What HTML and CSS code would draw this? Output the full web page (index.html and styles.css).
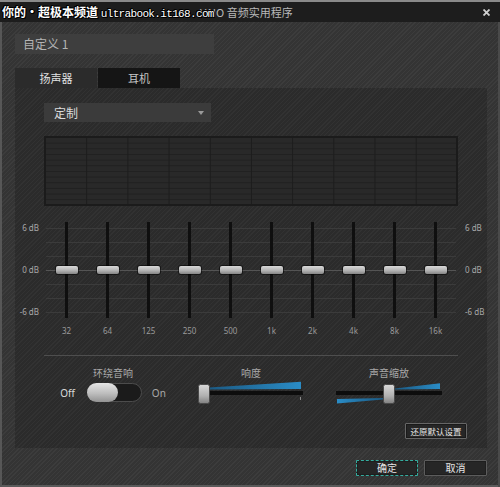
FILE: index.html
```html
<!DOCTYPE html>
<html lang="zh">
<head>
<meta charset="utf-8">
<title>VAIO 音频实用程序</title>
<link rel="stylesheet" href="styles.css">
</head>
<body>
<div class="window">
  <div class="titlebar">
    <span class="title">VAIO 音频实用程序</span>
    <svg class="close" width="7" height="7" viewBox="0 0 7 7"><path d="M0.5 0.5 L6.5 6.5 M6.5 0.5 L0.5 6.5" stroke="#d0d0d0" stroke-width="1.8"/></svg>
    <span class="watermark">你的・超极本频道 <span class="wm-url">ultrabook.it168.com</span></span>
  </div>
  <div class="content">
    <div class="preset">自定义 1</div>
    <div class="tabs">
      <div class="tab active">扬声器</div>
      <div class="tab">耳机</div>
    </div>
    <div class="panel">
      <div class="dropdown">
        <span>定制</span>
        <svg width="6" height="4" viewBox="0 0 6 4"><polygon points="0,0 6,0 3,4" fill="#9a9a9a"/></svg>
      </div>
      <div class="graph"></div>
      <div class="eq">
        <div class="db-col left"><span>6 dB</span><span>0 dB</span><span>-6 dB</span></div>
        <div class="bands">
          <div class="band"><div class="track"><div class="knob"></div></div><span class="freq">32</span></div>
          <div class="band"><div class="track"><div class="knob"></div></div><span class="freq">64</span></div>
          <div class="band"><div class="track"><div class="knob"></div></div><span class="freq">125</span></div>
          <div class="band"><div class="track"><div class="knob"></div></div><span class="freq">250</span></div>
          <div class="band"><div class="track"><div class="knob"></div></div><span class="freq">500</span></div>
          <div class="band"><div class="track"><div class="knob"></div></div><span class="freq">1k</span></div>
          <div class="band"><div class="track"><div class="knob"></div></div><span class="freq">2k</span></div>
          <div class="band"><div class="track"><div class="knob"></div></div><span class="freq">4k</span></div>
          <div class="band"><div class="track"><div class="knob"></div></div><span class="freq">8k</span></div>
          <div class="band"><div class="track"><div class="knob"></div></div><span class="freq">16k</span></div>
        </div>
        <div class="db-col right"><span>6 dB</span><span>0 dB</span><span>-6 dB</span></div>
      </div>
      <div class="sep"></div>
      <div class="controls">
        <div class="group g1">
          <span class="group-label">环绕音响</span>
          <div class="switch-row">
            <span class="off">Off</span>
            <div class="toggle"><div class="toggle-knob"></div></div>
            <span class="on">On</span>
          </div>
        </div>
        <div class="group g2">
          <span class="group-label">响度</span>
          <svg class="hslider" width="106" height="25" viewBox="0 0 106 25">
            <defs>
              <linearGradient id="blueA" x1="0" x2="1" y1="0" y2="0">
                <stop offset="0" stop-color="#1b5a84"/>
                <stop offset="1" stop-color="#2a8cc6"/>
              </linearGradient>
              <linearGradient id="knobA" x1="0" x2="0" y1="0" y2="1">
                <stop offset="0" stop-color="#dadada"/>
                <stop offset="0.6" stop-color="#b0b0b0"/>
                <stop offset="1" stop-color="#808080"/>
              </linearGradient>
            </defs>
            <rect x="0" y="11" width="105" height="4" fill="#0d0d0d"/>
            <polygon points="11,7.6 103,1.7 103,9 11,9.4" fill="url(#blueA)"/>
            <rect x="102" y="17" width="1" height="3" fill="#8a8a8a"/>
            <rect x="0.5" y="4.5" width="11" height="19" rx="2" fill="url(#knobA)" stroke="#4a4a4a"/>
          </svg>
        </div>
        <div class="group g3">
          <span class="group-label">声音缩放</span>
          <svg class="hslider" width="106" height="25" viewBox="0 0 106 25">
            <defs>
              <linearGradient id="blueB" x1="0" x2="1" y1="0" y2="0">
                <stop offset="0" stop-color="#1b5a84"/>
                <stop offset="1" stop-color="#2a8cc6"/>
              </linearGradient>
              <linearGradient id="blueC" x1="0" x2="1" y1="0" y2="0">
                <stop offset="0" stop-color="#2a8cc6"/>
                <stop offset="1" stop-color="#1b5a84"/>
              </linearGradient>
              <linearGradient id="knobB" x1="0" x2="0" y1="0" y2="1">
                <stop offset="0" stop-color="#dadada"/>
                <stop offset="0.6" stop-color="#b0b0b0"/>
                <stop offset="1" stop-color="#808080"/>
              </linearGradient>
            </defs>
            <rect x="0" y="11" width="106" height="4" fill="#0d0d0d"/>
            <polygon points="59,8.6 104,3.3 104,9 59,9.4" fill="url(#blueB)"/>
            <polygon points="1,19 47,18 47,19.4 1,23.4" fill="url(#blueC)"/>
            <rect x="47.5" y="4.5" width="11" height="19" rx="2" fill="url(#knobB)" stroke="#4a4a4a"/>
          </svg>
        </div>
      </div>
      <div class="reset-row"><button class="btn reset">还原默认设置</button></div>
    </div>
    <div class="footer">
      <button class="btn ok">确定</button>
      <button class="btn cancel">取消</button>
    </div>
  </div>
</div>
</body>
</html>
```

FILE: styles.css
```css
* { box-sizing: border-box; }

body {
  margin: 0;
  width: 500px;
  height: 487px;
  overflow: hidden;
  background: #333;
  font-family: "Noto Sans CJK SC", "Noto Sans", sans-serif;
}

.window {
  width: 500px;
  height: 487px;
  background-color: #343434;
  background-image: repeating-linear-gradient(135deg, rgba(255,255,255,0.04) 0 1px, rgba(0,0,0,0) 1px 3px);
  box-shadow: inset 2px 0 #575757, inset -2px 0 #4a4a4a, inset 0 -2px #5a5a5a;
}

/* title bar */
.titlebar {
  position: relative;
  height: 22px;
  border-top: 2px solid #8a8a8a;
  background: #1d1d1d;
  display: flex;
  align-items: center;
  justify-content: space-between;
  padding: 0 10px 0 200px;
}

.title {
  font-size: 11px;
  line-height: 14px;
  color: #b8b8b8;
}

.close { display: block; }

.watermark {
  position: absolute;
  left: 2px;
  top: 2px;
  font-size: 12px;
  line-height: 16px;
  color: #fff;
  font-weight: bold;
  white-space: nowrap;
  text-shadow: 1px 0 #000, -1px 0 #000, 0 1px #000, 0 -1px #000, 1px 1px #000, -1px -1px #000;
}

.wm-url {
  font-family: "Liberation Mono", monospace;
  font-size: 11px;
  font-weight: normal;
  letter-spacing: -0.65px;
}

/* content */
.content {
  padding: 12px 13px 0 15px;
}

.preset {
  width: 199px;
  height: 20px;
  background: #3e3e3e;
  color: #b4b4b4;
  font-size: 12px;
  line-height: 20px;
  padding-left: 8px;
}

.tabs {
  display: flex;
  margin-top: 14px;
}

.tab {
  width: 82px;
  height: 20px;
  font-size: 11px;
  line-height: 20px;
  text-align: center;
  color: #c4c4c4;
  background: #151515;
  margin-left: 1px;
}

.tab.active {
  margin-left: 0;
  background: #2b2b2b;
  color: #e2e2e2;
}

.panel {
  width: 472px;
  height: 360px;
  background-color: #2b2b2b;
  background-image: repeating-linear-gradient(135deg, rgba(255,255,255,0.03) 0 1px, rgba(0,0,0,0) 1px 3px);
  padding-top: 15px;
}

.dropdown {
  margin-left: 29px;
  width: 167px;
  height: 19px;
  background: #3b3b3b;
  display: flex;
  align-items: center;
  justify-content: space-between;
  padding: 0 7px 0 10px;
  color: #dcdcdc;
  font-size: 12px;
  line-height: 19px;
}

.graph {
  margin: 14px 0 0 29px;
  width: 414px;
  height: 70px;
  border: 2px solid #1b1b1b;
  background-color: #292929;
  background-image:
    linear-gradient(to right, #1c1c1c 1px, rgba(0,0,0,0) 1px),
    linear-gradient(to bottom, #202020 1px, rgba(0,0,0,0) 1px);
  background-size: 41.2px 100%, 100% 5.67px;
  background-position: -1px 0, 0 -1px;
}

/* equalizer */
.eq {
  display: flex;
  margin-top: 15px;
}

.db-col {
  width: 31px;
  height: 98px;
  display: flex;
  flex-direction: column;
  justify-content: space-between;
  font-family: "Noto Sans", sans-serif;
  font-size: 8px;
  line-height: 14px;
  color: #a8a8a8;
  white-space: nowrap;
}

.db-col.left {
  align-items: flex-end;
  padding-right: 7px;
}

.db-col.right {
  align-items: flex-start;
  padding-left: 9px;
}

.bands {
  display: flex;
  width: 410px;
  background-image:
    linear-gradient(to bottom, rgba(0,0,0,0) 49px, #545454 49px, #545454 50px, rgba(0,0,0,0) 50px),
    repeating-linear-gradient(to bottom, rgba(0,0,0,0) 0 7px, #3b3b3b 7px 8px, rgba(0,0,0,0) 8px 14px);
  background-size: 100% 98px, 100% 98px;
  background-repeat: no-repeat;
}

.band {
  width: 41px;
  display: flex;
  flex-direction: column;
  align-items: center;
}

.track {
  margin-top: 1px;
  width: 3px;
  height: 96px;
  background: #0f0f0f;
  display: flex;
  align-items: center;
  justify-content: center;
}

.knob {
  flex-shrink: 0;
  width: 22px;
  height: 8px;
  border-radius: 2px;
  background: linear-gradient(#d8d8d8, #b4b4b4 55%, #858585);
  box-shadow: 0 0 0 1px rgba(0,0,0,0.5);
}

.freq {
  margin-top: 7px;
  font-family: "Noto Sans", sans-serif;
  font-size: 8px;
  line-height: 12px;
  color: #9a9a9a;
}

.sep {
  margin: 18px 0 0 29px;
  width: 414px;
  height: 1px;
  background: #4e4e4e;
}

/* bottom controls */
.controls {
  display: flex;
  margin: 10px 0 0 40px;
}

.group {
  display: flex;
  flex-direction: column;
  align-items: center;
}

.group-label {
  font-size: 10px;
  line-height: 14px;
  color: #a8a8a8;
}

.g1 { width: 116px; }
.g2 { width: 106px; margin-left: 27px; }
.g3 { width: 106px; margin-left: 32px; }

.hslider { display: block; }

.switch-row {
  height: 25px;
  display: flex;
  align-items: center;
}

.off, .on {
  font-family: "Noto Sans", sans-serif;
  font-size: 10px;
  line-height: 12px;
}

.off { color: #dcdcdc; margin-right: 12px; }
.on { color: #a8a8a8; margin-left: 10px; }

.toggle {
  width: 55px;
  height: 19px;
  border-radius: 10px;
  background: #1b1b1b;
  border: 1px solid #4c4c4c;
  display: flex;
}

.toggle-knob {
  width: 31px;
  height: 19px;
  margin: -1px;
  border-radius: 10px;
  background: linear-gradient(#e6e6e6, #bdbdbd 55%, #929292);
}

.reset-row {
  display: flex;
  justify-content: flex-end;
  padding-right: 20px;
  margin-top: 18px;
}

.btn {
  font-family: "Noto Sans CJK SC", sans-serif;
  height: 16px;
  padding: 0;
  background: #262626;
  border: 1px solid #666;
  color: #e6e6e6;
  font-size: 10px;
  line-height: 14px;
  border-radius: 1px;
}

.reset {
  width: 62px;
  font-size: 8.5px;
  box-shadow: inset 0 0 0 1px #1a1a1a;
}

.footer {
  display: flex;
  justify-content: flex-end;
  gap: 6px;
  margin-top: 12px;
}

.ok {
  width: 62px;
  border: 1px dashed #34ad9f;
  box-shadow: inset 0 0 0 1px #1e1e1e;
}

.cancel {
  width: 63px;
  border-color: #5c5c5c;
  box-shadow: inset 0 0 0 1px #1e1e1e;
}
```
